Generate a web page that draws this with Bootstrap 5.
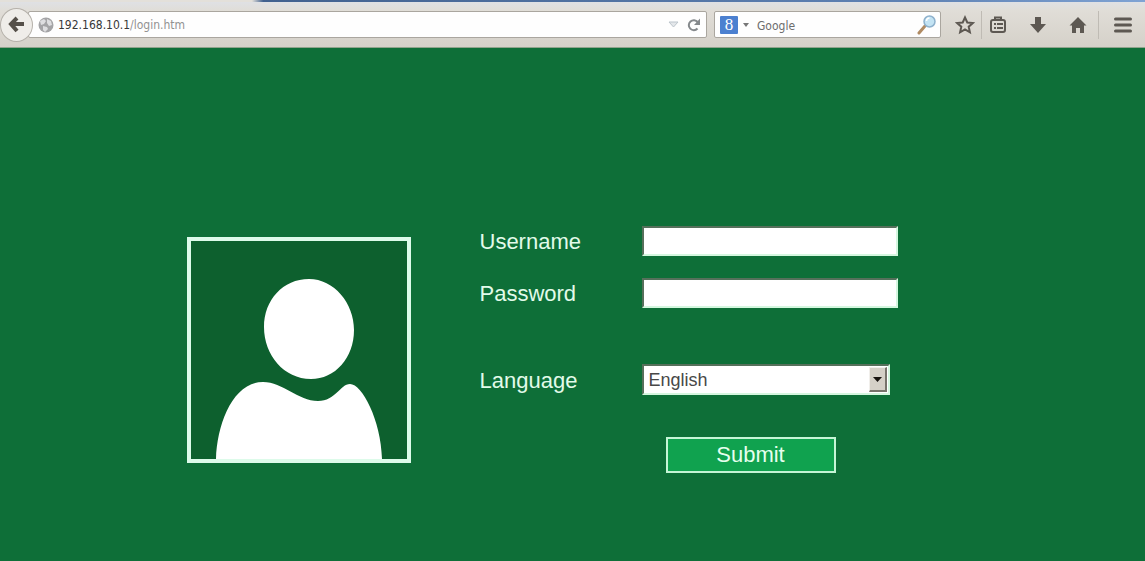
<!DOCTYPE html>
<html lang="en">
<head>
<meta charset="utf-8">
<meta name="viewport" content="width=device-width, initial-scale=1">
<title>Login</title>
<link href="https://cdn.jsdelivr.net/npm/bootstrap@5.3.0/dist/css/bootstrap.min.css" rel="stylesheet">
<style>
  body { background: #0e6f38; font-family: "Liberation Sans", Arial, sans-serif; }
  .tabstrip { height: 2px; background: linear-gradient(90deg, #e3e0da 22%, #41618f 23%, #5f82b4 80%, #7fa3d4); }
  .toolbar { height: 46px; padding: 0 10px 0 0; background: linear-gradient(#dfe1e4, #e0ddd7 20%, #d5d1c9); border-bottom: 1px solid #91a48d;
    font-family: "DejaVu Sans Condensed", "DejaVu Sans", sans-serif; font-size: 12px; }
  .toolbar button { padding: 0; border: 0; background: none; display: flex; align-items: center; justify-content: center; flex: none; }
  .toolbar .back-btn { width: 33px; height: 34px; border-radius: 50%; background: #efede9; border: 1px solid #b5b1aa; position: relative; z-index: 1; }
  .field-box { height: 27px; background: #fefefe; border: 1px solid #aaa69f; border-radius: 2px; }
  .address { margin-left: -5px; padding: 0 5px 0 9px; }
  .address a { color: #929292; }
  .address b { color: #383838; font-weight: 400; }
  .search { width: 227px; margin-left: 7px; padding: 0 3px 0 5px; }
  .search input { min-width: 0; border: 0; padding: 3px 0 0; outline: 0; background: none; font-size: 12px; color: #555; }
  .search input::placeholder { color: #6d6d6d; opacity: 1; }
  .engine { width: 18px; height: 18px; background: #4b80d0; color: #fff; font: 17px/17px "Liberation Serif", serif; text-align: center; border-radius: 1px; }
  .engine-arrow { margin: 0 8px 0 5px; }
  .tools { margin-left: 12px; }
  .tools button { width: 24px; height: 26px; }
  .divider { width: 1px; height: 28px; background: #bfbbb4; }
  .login { padding: 178px 61px 24px 0; gap: 69px; }
  .avatar { width: 224px; height: 226px; margin-top: 11px; border: 4px solid #ddfbea; background: #0d602e; }
  .login-form { width: 418px; color: #e2fbea; font-size: 22px; line-height: 30px; }
  .login-form label { width: 162px; flex: none; padding-top: 2px; line-height: 28px; }
  .password-row { margin-top: 22px; }
  .language-row { margin-top: 56px; }
  .sunken { height: 30px; border: 2px solid; border-color: #56705b #d4f7df #d4f7df #56705b; border-radius: 0; background: #fff; color: #484848; font-size: 18px; }
  .select-wrap { width: 248px; }
  .select-wrap select { height: 31px; appearance: none; padding: 0 24px 0 5px; line-height: 24px; }
  .drop { right: 3px; top: 3px; bottom: 3px; width: 18px; background: #d5d0c7; border: 1px solid; border-color: #f1efeb #77736b #77736b #f1efeb; border-right-width: 2px; border-bottom-width: 2px; pointer-events: none; }
  .submit-btn { width: 170px; height: 36px; margin: 42px 0 0 186px; padding: 0; border: 2px solid #c5f5d6; background: #10a24f; color: #e5ffee; line-height: 32px; }
</style>
</head>
<body>
<header>
  <div class="tabstrip"></div>
  <div class="toolbar d-flex align-items-center">
    <button class="back-btn" type="button" aria-label="Back">
      <svg width="17" height="17" viewBox="0 0 17 17" fill="none" stroke="#555049" stroke-width="4"><path d="M9 2 3 8l6 7M3 8h13"/></svg>
    </button>
    <div class="address field-box d-flex align-items-center flex-grow-1">
      <svg class="me-1" width="16" height="16" viewBox="0 0 16 16"><circle cx="8" cy="8" r="7.5" fill="#a4a4a6"/><path d="m2 4 4-2 2 2-2 3-3 1zm7-2 4 2 1 4-3 1-2-3zM5 9l4 1 1 2-3 3-2-2z" fill="#dedee0"/></svg>
      <a class="text-decoration-none flex-grow-1" href="#"><b>192.168.10.1</b>/login.htm</a>
      <svg width="11" height="8" viewBox="0 0 11 8" fill="#e4e7ea" stroke="#bcc5cc"><path d="M1 1h9L5.5 6z"/></svg>
      <button class="ms-2" type="button" aria-label="Reload">
        <svg width="14" height="14" viewBox="0 0 14 14"><path d="M10.5 10.5a5 5 0 1 1 .2-6.5" fill="none" stroke="#85898c" stroke-width="2"/><path d="M13 .5V7H7z" fill="#85898c"/></svg>
      </button>
    </div>
    <div class="search field-box d-flex align-items-center">
      <span class="engine">8</span>
      <svg class="engine-arrow" width="6" height="4" viewBox="0 0 6 4"><path d="M0 0h6L3 4z" fill="#777"/></svg>
      <input class="flex-grow-1" type="text" placeholder="Google" aria-label="Search">
      <button type="button" aria-label="Search">
        <svg width="20" height="20" viewBox="0 0 20 20"><path d="m2 18 6-7" stroke="#b08b63" stroke-width="3" stroke-linecap="round"/><circle cx="12.5" cy="6.5" r="5.5" fill="#c3e3f3" stroke="#8eb1cc" stroke-width="1.5"/><path d="M9.5 6a3 3 0 0 1 3-3" stroke="#fff" stroke-width="1.5" fill="none"/></svg>
      </button>
    </div>
    <div class="tools d-flex align-items-center">
      <button type="button" aria-label="Bookmark"><svg width="20" height="20" viewBox="0 0 20 20"><path d="m10 2.5 2.3 5 5.5.6-4.1 3.6 1.2 5.6-4.9-2.8-4.9 2.8 1.2-5.600-4.100-3.600 5.500-.6z" fill="none" stroke="#5d5852" stroke-width="2"/></svg></button>
      <span class="divider mx-1"></span>
      <button type="button" aria-label="Bookmarks list"><svg width="18" height="18" viewBox="0 0 18 18" fill="none" stroke="#5d5852" stroke-width="2"><rect x="2" y="4" width="14" height="12" rx="2"/><path d="M6 4V1.500h6V4M5 8h2m1 0h6M5 12h2m1 0h6"/></svg></button>
      <button class="ms-3" type="button" aria-label="Downloads"><svg width="18" height="18" viewBox="0 0 18 18" fill="#5d5852"><path d="M6 1h6v7h5l-8 9-8-9h5z"/></svg></button>
      <button class="ms-3 me-2" type="button" aria-label="Home"><svg width="18" height="18" viewBox="0 0 18 18" fill="#5d5852"><path d="m9 1 8.500 8.500H15V17h-4v-5H7v5H3V9.500H.5z"/></svg></button>
      <span class="divider me-2"></span>
      <button class="ms-1" type="button" aria-label="Menu"><svg width="18" height="16" viewBox="0 0 18 16" stroke="#5d5852" stroke-width="3" stroke-linecap="round"><path d="M1.500 2h15M1.500 8h15M1.500 14h15"/></svg></button>
    </div>
  </div>
</header>
<main class="login d-flex justify-content-center align-items-start">
  <div class="avatar flex-shrink-0">
    <svg class="d-block w-100 h-100" viewBox="0 0 216 218" fill="#fff" role="img" aria-label="User"><path d="M118 38c25 0 45 24 45 51 0 28-19 49-43 49-27 0-47-24-47-52 0-27 19-48 45-48zM25 218c1-35 17-77 47-77 20 0 35 19 55 19 18 0 22-17 32-17 12 0 31 36 32 75z"/></svg>
  </div>
  <form class="login-form">
    <div class="d-flex align-items-center">
      <label for="user">Username</label>
      <input id="user" class="sunken flex-grow-1" type="text">
    </div>
    <div class="password-row d-flex align-items-center">
      <label for="pass">Password</label>
      <input id="pass" class="sunken flex-grow-1" type="password">
    </div>
    <div class="language-row d-flex align-items-center">
      <label for="lang">Language</label>
      <div class="select-wrap position-relative d-flex">
        <select id="lang" class="sunken w-100"><option>English</option></select>
        <span class="drop position-absolute d-flex align-items-center justify-content-center"><svg width="9" height="5" viewBox="0 0 9 5"><path d="M0 0h9L4.500 5z" fill="#17120e"/></svg></span>
      </div>
    </div>
    <button class="submit-btn d-block" type="submit">Submit</button>
  </form>
</main>
<script src="https://cdn.jsdelivr.net/npm/bootstrap@5.3.0/dist/js/bootstrap.bundle.min.js"></script>
</body>
</html>
